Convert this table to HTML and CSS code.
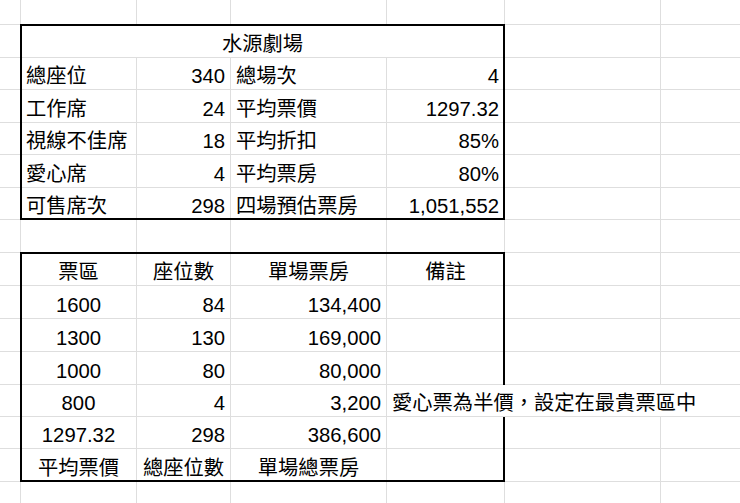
FILE: index.html
```html
<!DOCTYPE html>
<html lang="zh-Hant">
<head>
<meta charset="utf-8">
<title>水源劇場</title>
<link rel="stylesheet" href="styles.css">
</head>
<body>
<div class="sheet">
  <!-- row 1 -->
  <div class="c"></div><div class="c"></div><div class="c"></div><div class="c"></div><div class="c"></div><div class="c"></div><div class="c"></div>

  <!-- row 2: frame 1 -->
  <div class="c"></div>
  <div class="frame">
    <div class="c m title">水源劇場</div>
    <div class="c">總座位</div><div class="c r">340</div><div class="c">總場次</div><div class="c r">4</div>
    <div class="c">工作席</div><div class="c r">24</div><div class="c">平均票價</div><div class="c r">1297.32</div>
    <div class="c">視線不佳席</div><div class="c r">18</div><div class="c">平均折扣</div><div class="c r">85%</div>
    <div class="c">愛心席</div><div class="c r">4</div><div class="c">平均票房</div><div class="c r">80%</div>
    <div class="c">可售席次</div><div class="c r">298</div><div class="c">四場預估票房</div><div class="c r">1,051,552</div>
  </div>
  <div class="c"></div><div class="c"></div>
  <div class="c"></div><div class="c"></div><div class="c"></div>
  <div class="c"></div><div class="c"></div><div class="c"></div>
  <div class="c"></div><div class="c"></div><div class="c"></div>
  <div class="c"></div><div class="c"></div><div class="c"></div>
  <div class="c"></div><div class="c"></div><div class="c"></div>

  <!-- row 8 -->
  <div class="c"></div><div class="c"></div><div class="c"></div><div class="c"></div><div class="c"></div><div class="c"></div><div class="c"></div>

  <!-- row 9: frame 2 -->
  <div class="c"></div>
  <div class="frame tall">
    <div class="c m">票區</div><div class="c m">座位數</div><div class="c m">單場票房</div><div class="c m">備註</div>
    <div class="c m">1600</div><div class="c r">84</div><div class="c r">134,400</div><div class="c"></div>
    <div class="c m">1300</div><div class="c r">130</div><div class="c r">169,000</div><div class="c"></div>
    <div class="c m">1000</div><div class="c r">80</div><div class="c r">80,000</div><div class="c"></div>
    <div class="c m">800</div><div class="c r">4</div><div class="c r">3,200</div><div class="c note">愛心票為半價，設定在最貴票區中</div>
    <div class="c m">1297.32</div><div class="c r">298</div><div class="c r">386,600</div><div class="c"></div>
    <div class="c m">平均票價</div><div class="c m">總座位數</div><div class="c m">單場總票房</div><div class="c"></div>
  </div>
  <div class="c"></div><div class="c"></div>
  <div class="c"></div><div class="c"></div><div class="c"></div>
  <div class="c"></div><div class="c"></div><div class="c"></div>
  <div class="c"></div><div class="c"></div><div class="c"></div>
  <div class="c"></div><div class="c"></div><div class="c"></div>
  <div class="c"></div><div class="c"></div><div class="c"></div>
  <div class="c"></div><div class="c"></div><div class="c"></div>

  <!-- row 16 -->
  <div class="c"></div><div class="c"></div><div class="c"></div><div class="c"></div><div class="c"></div><div class="c"></div><div class="c"></div>
</div>
</body>
</html>
```

FILE: styles.css
```css
* {
  box-sizing: border-box;
}

html,
body {
  margin: 0;
  background: #ffffff;
}

body {
  font-family: "Liberation Sans", "Noto Sans CJK TC", sans-serif;
  font-size: 20.3px;
  line-height: 22px;
  color: #000000;
  overflow: hidden;
}

.sheet {
  display: grid;
  grid-template-columns: 21px 116px 94px 156px 118px 156px 100px;
  grid-template-rows: 25px 33px 32px 33px 32px 33px 32px 33px 33px 33px 33px 33px 32px 32px 33px 33px;
  width: 740px;
  height: 503px;
  overflow: hidden;
}

.c {
  display: flex;
  align-items: flex-end;
  padding: 0 5px 2px 5px;
  border-right: 1px solid #dedede;
  border-bottom: 1px solid #dedede;
  white-space: nowrap;
  min-width: 0;
}

.r {
  justify-content: flex-end;
}

.m {
  justify-content: center;
}

.frame {
  grid-column: span 4;
  grid-row: span 6;
  display: grid;
  grid-template-columns: subgrid;
  grid-template-rows: subgrid;
  position: relative;
}

.frame.tall {
  grid-row: span 7;
}

.frame::after {
  content: "";
  position: absolute;
  top: -1px;
  left: -1px;
  right: 0;
  bottom: 0;
  border: 2px solid #000000;
  pointer-events: none;
  z-index: 1;
}

.title {
  grid-column: span 4;
}

.note {
  justify-self: start;
  width: max-content;
  border-right: 0;
  background: #ffffff;
  position: relative;
  z-index: 2;
}
```
